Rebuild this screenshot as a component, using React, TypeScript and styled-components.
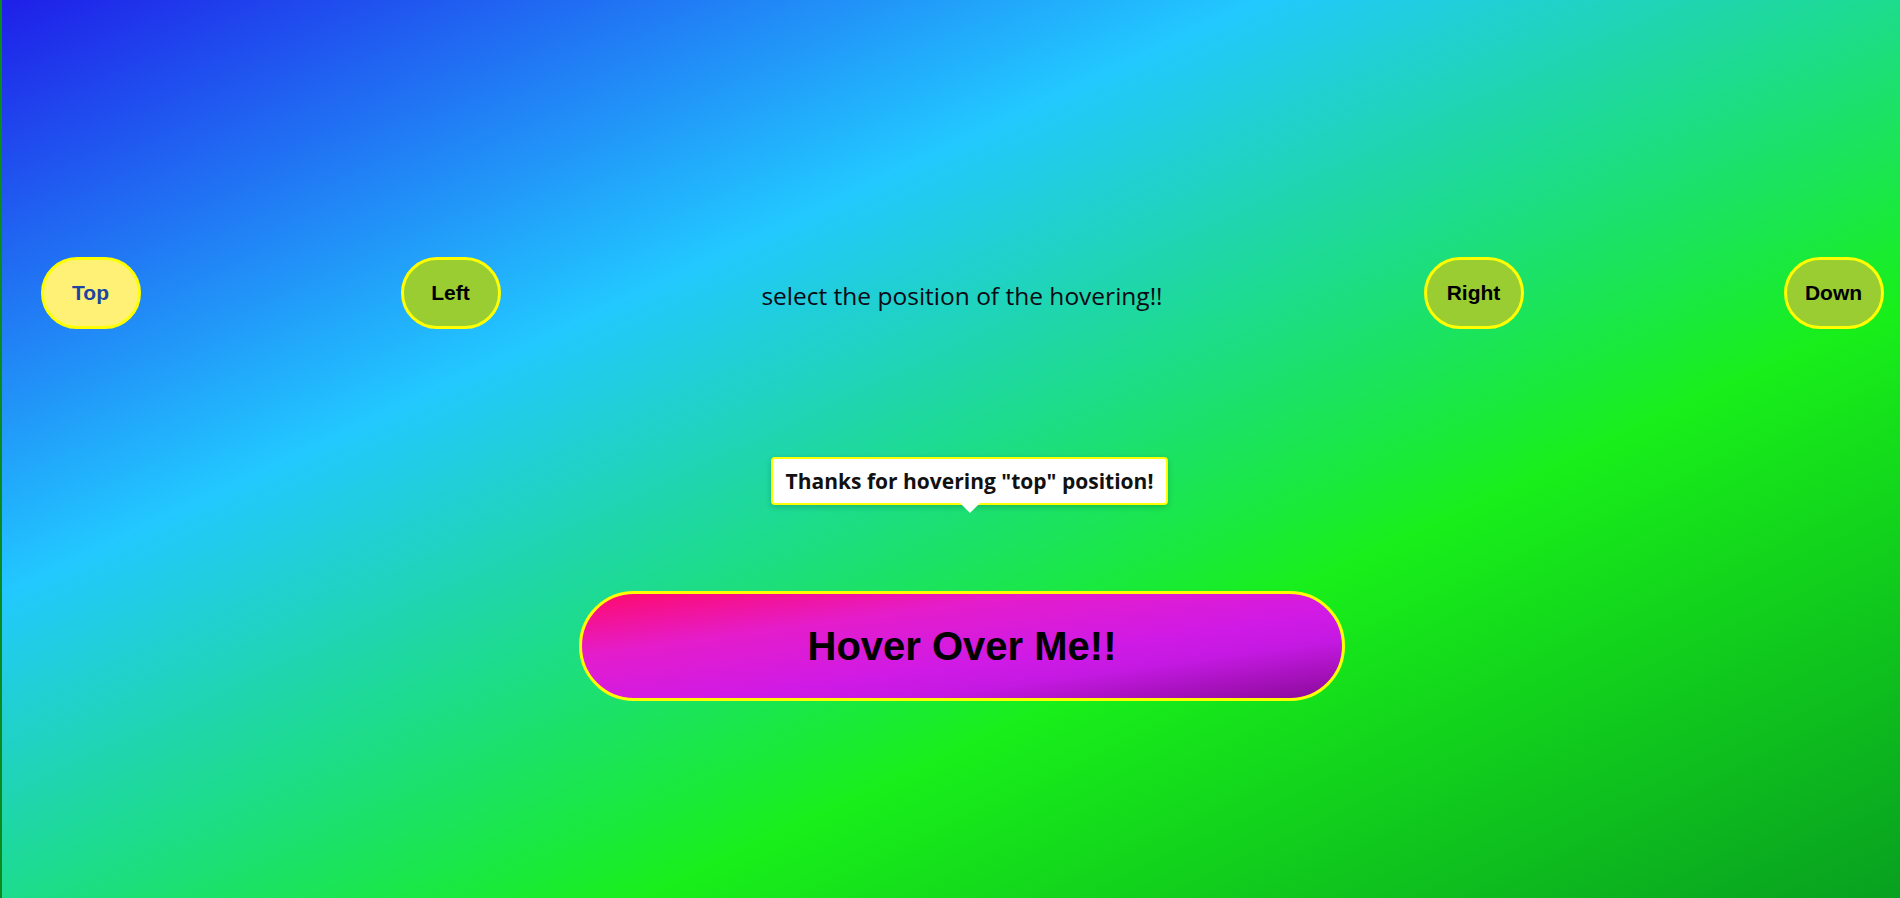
import React from "react";
import styled, { createGlobalStyle } from "styled-components";

const GlobalStyle = createGlobalStyle`
  html, body {
    margin: 0;
    padding: 0;
    background: #0a8a1e;
  }
  * { box-sizing: border-box; }
`;

const Page = styled.div`
  min-height: 100vh;
  height: 898px;
  overflow: hidden;
  border-left: 2px solid #0b8a1f;
  background: linear-gradient(
    to bottom right,
    #1f1fe8 0%,
    #22c8ff 33%,
    #18ef1a 67%,
    #08a020 100%
  );
`;

const Stage = styled.div`
  width: 1920px;
  display: flex;
  flex-direction: column;
  align-items: center;
  padding-top: 257px;
`;

const Controls = styled.div`
  display: flex;
  align-items: center;
  gap: 260px;
`;

const PosButton = styled.button<{ $active?: boolean }>`
  width: 100px;
  height: 72px;
  border: 3px solid #ffff00;
  border-radius: 36px;
  background: ${(p) => (p.$active ? "#fff176" : "#9acd32")};
  color: ${(p) => (p.$active ? "#1d44a3" : "#000")};
  font-family: "Liberation Sans", Arial, sans-serif;
  font-weight: 700;
  font-size: 21px;
  padding: 0;
  cursor: pointer;
`;

const Prompt = styled.p`
  width: 403px;
  margin: 0;
  padding-top: 4px;
  text-align: center;
  white-space: nowrap;
  font-family: "Open Sans", "Noto Sans", sans-serif;
  font-size: 24.5px;
  color: #0a0a14;
`;

const HoverZone = styled.div`
  position: relative;
  margin-top: 262px;
`;

const Tooltip = styled.div`
  position: absolute;
  left: 50%;
  bottom: calc(100% + 86px);
  transform: translateX(calc(-50% + 7.5px));
  width: 397px;
  height: 48px;
  display: flex;
  align-items: center;
  justify-content: center;
  background: #fff;
  border: 2px solid #ffff00;
  border-radius: 4px;
  box-shadow: 0 2px 6px rgba(0, 0, 0, 0.18);
  font-family: "Open Sans", "Noto Sans", sans-serif;
  font-weight: 700;
  font-size: 21px;
  color: #111;
  white-space: nowrap;

  &::after {
    content: "";
    position: absolute;
    left: 50%;
    top: 100%;
    transform: translateX(-50%);
    border-left: 10px solid transparent;
    border-right: 10px solid transparent;
    border-top: 10px solid #fff;
  }
`;

const BigButton = styled.button`
  width: 766px;
  height: 110px;
  border: 3px solid #ffff00;
  border-radius: 55px;
  background: linear-gradient(
    to bottom right,
    #ff0a6a 0%,
    #e41dcc 30%,
    #cf1ae6 60%,
    #c419e2 72%,
    #8a0a98 100%
  );
  font-family: "Liberation Sans", Arial, sans-serif;
  font-weight: 700;
  font-size: 40px;
  color: #000;
  cursor: pointer;
`;

export default function App() {
  return (
    <>
      <GlobalStyle />
      <Page>
        <Stage>
          <Controls>
            <PosButton $active>Top</PosButton>
            <PosButton>Left</PosButton>
            <Prompt>select the position of the hovering!!</Prompt>
            <PosButton>Right</PosButton>
            <PosButton>Down</PosButton>
          </Controls>
          <HoverZone>
            <Tooltip>Thanks for hovering "top" position!</Tooltip>
            <BigButton>Hover Over Me!!</BigButton>
          </HoverZone>
        </Stage>
      </Page>
    </>
  );
}
